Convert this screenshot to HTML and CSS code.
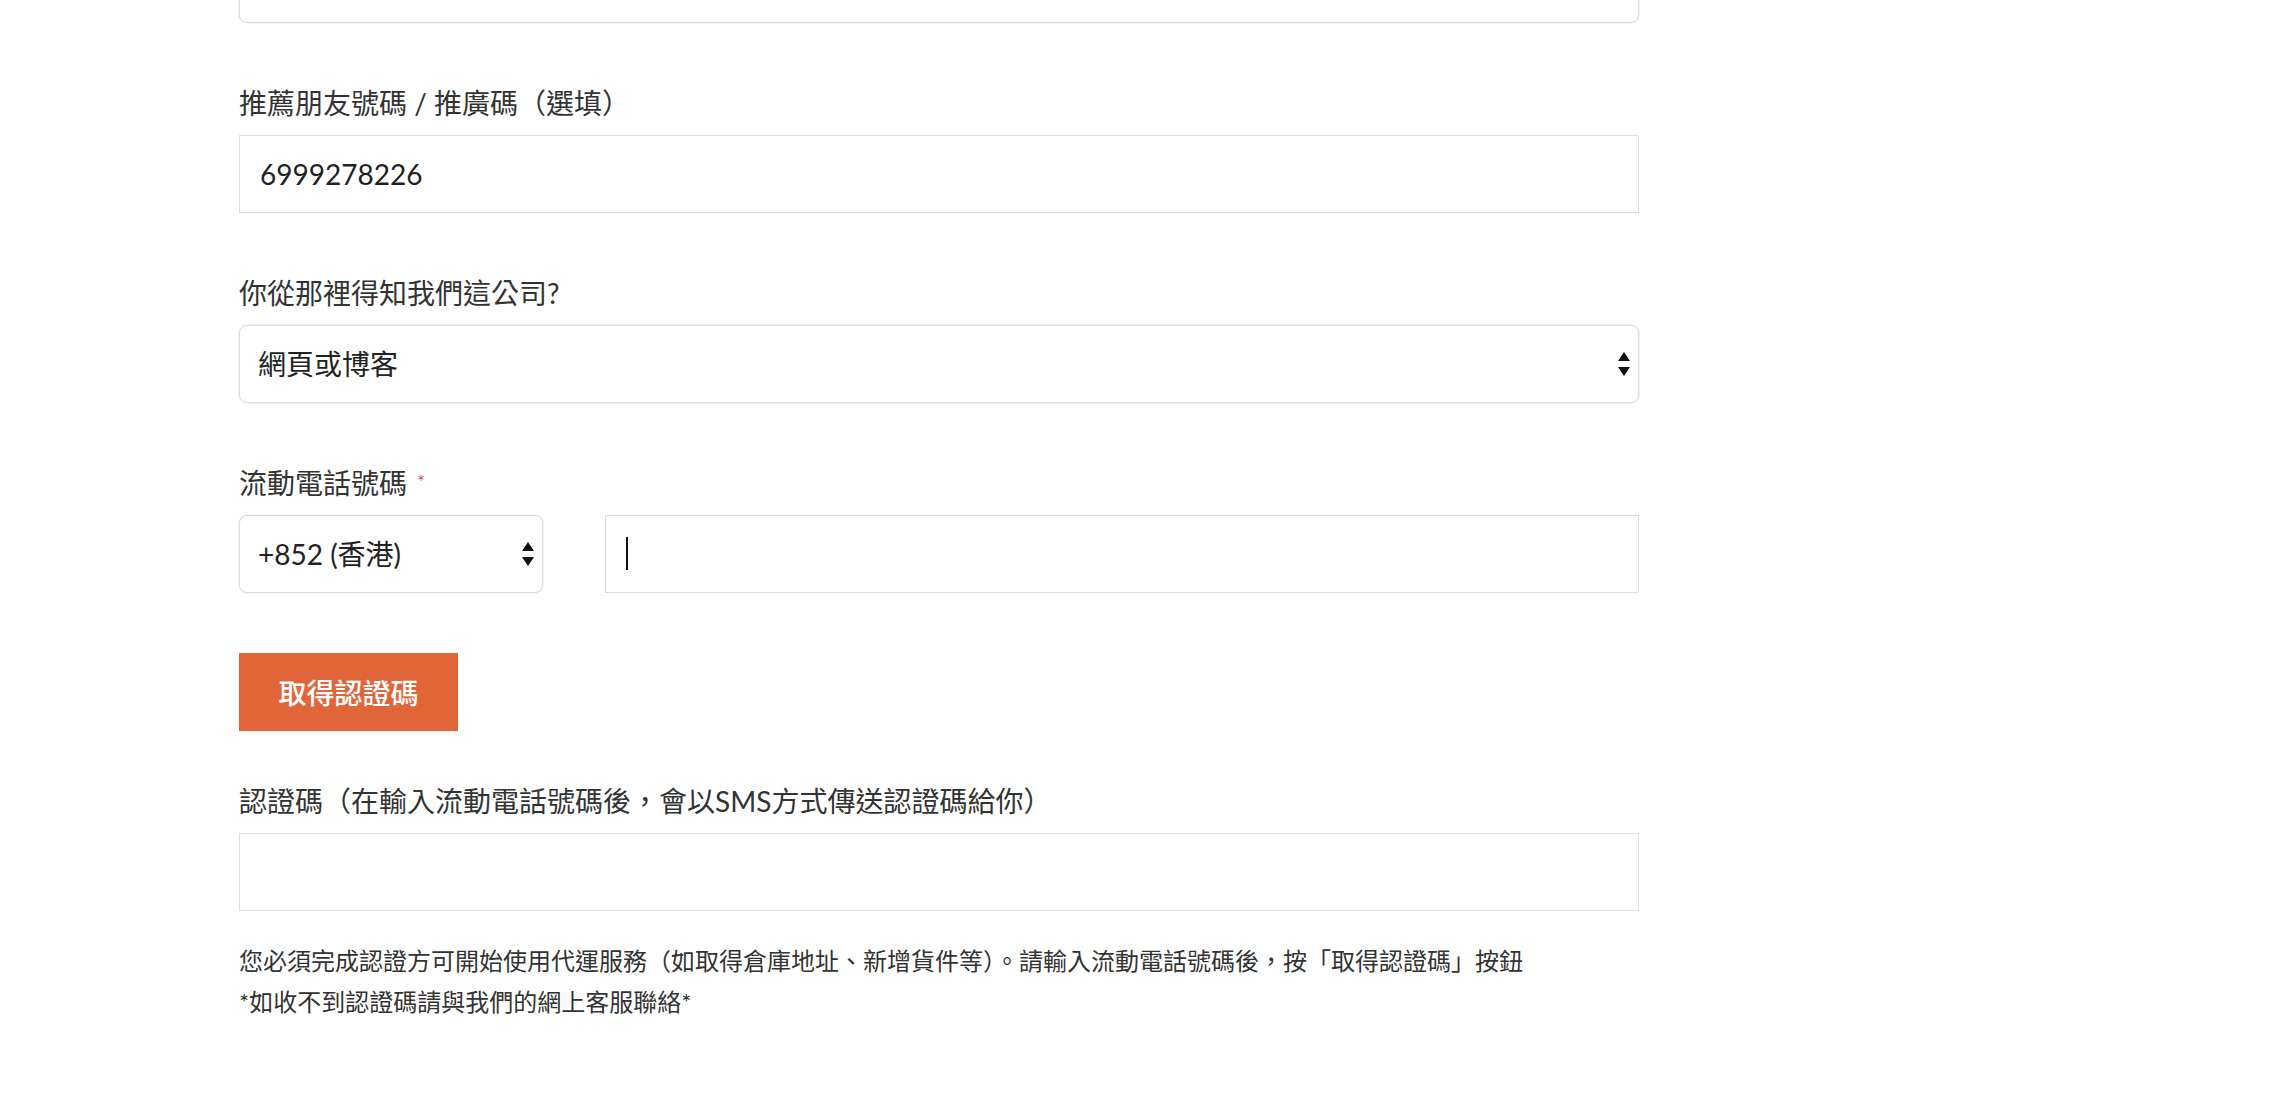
FILE: index.html
```html
<!DOCTYPE html>
<html lang="zh-Hant">

<head>
    <meta charset="utf-8">
    <link rel="stylesheet" href="styles.css">
</head>

<body>
    <form class="signup">
        <!-- 上一欄，已捲出畫面 -->
        <div class="field">
            <div class="select-box">
                <select class="control select">
                    <option>香港</option>
                </select>
                <svg class="arrows" viewBox="0 0 12 24"><polygon points="0,9 6,0 12,9" /><polygon points="0,15 6,24 12,15" /></svg>
            </div>
        </div>

        <div class="field">
            <label class="field-label">推薦朋友號碼 / 推廣碼（選填）</label>
            <input class="control" name="referral" value="6999278226" />
        </div>

        <div class="field">
            <label class="field-label">你從那裡得知我們這公司?</label>
            <div class="select-box">
                <select class="control select" name="source">
                    <option>網頁或博客</option>
                </select>
                <svg class="arrows" viewBox="0 0 12 24"><polygon points="0,9 6,0 12,9" /><polygon points="0,15 6,24 12,15" /></svg>
            </div>
        </div>

        <div class="field">
            <label class="field-label">流動電話號碼 <span class="required">*</span></label>
            <div class="phone-row">
                <div class="select-box phone-code">
                    <select class="control select" name="area">
                        <option>+852 (香港)</option>
                    </select>
                    <svg class="arrows" viewBox="0 0 12 24"><polygon points="0,9 6,0 12,9" /><polygon points="0,15 6,24 12,15" /></svg>
                </div>
                <div class="phone-input">
                    <input class="control" name="mobile" value="" />
                    <span class="caret"></span>
                </div>
            </div>
        </div>

        <button type="button" class="btn-code">取得認證碼</button>

        <div class="field">
            <label class="field-label">認證碼（在輸入流動電話號碼後，會以SMS方式傳送認證碼給你）</label>
            <input class="control" name="code" value="" />
        </div>

        <p class="note">
            您必須完成認證方可開始使用代運服務（如取得倉庫地址、新增貨件等）。請輸入流動電話號碼後，按「取得認證碼」按鈕<br>
            *如收不到認證碼請與我們的網上客服聯絡*
        </p>
    </form>
</body>

</html>
```

FILE: styles.css
```css
body {
    margin: 0;
    background: #fff;
    color: #333;
    font-family: 'Lato', 'Noto Sans CJK TC', sans-serif;
    overflow: hidden;
}

.signup {
    width: 1400px;
    margin: -55px 0 0 239px;
}

.field {
    margin-bottom: 60px;
}

.field-label {
    display: block;
    font-size: 28px;
    line-height: 40px;
    margin-bottom: 12px;
    color: #333;
}

.required {
    display: inline-block;
    vertical-align: top;
    font-size: 18px;
    line-height: 20px;
    margin: 8px 0 0 3px;
    color: #c8506e;
}

.control {
    display: block;
    box-sizing: border-box;
    width: 100%;
    height: 78px;
    margin: 0;
    padding: 0 20px;
    border: 1px solid #dcdcdc;
    background: #fff;
    font-family: 'Lato', 'Noto Sans CJK TC', sans-serif;
    font-size: 28px;
    color: #222;
    outline: none;
}

.select-box {
    position: relative;
}

.select {
    -webkit-appearance: none;
    appearance: none;
    padding: 0 40px 0 18px;
    border-radius: 8px;
    box-shadow: 0 0 0 1px #f3f3f3;
}

.arrows {
    position: absolute;
    right: 9px;
    top: 27px;
    width: 12px;
    height: 24px;
    fill: #111;
    pointer-events: none;
}

.phone-row {
    display: flex;
    gap: 62px;
}

.phone-code {
    width: 304px;
    flex: none;
}

.phone-input {
    position: relative;
    flex: 1;
}

.caret {
    position: absolute;
    left: 21px;
    top: 22px;
    width: 2px;
    height: 33px;
    background: #111;
}

.btn-code {
    display: block;
    width: 219px;
    height: 78px;
    margin: 0 0 50px;
    padding: 0;
    border: none;
    background: #e0663a;
    color: #fff;
    font-family: 'Lato', 'Noto Sans CJK TC', sans-serif;
    font-size: 28px;
    font-weight: 500;
}

.note {
    margin: -31px 0 0;
    font-size: 24px;
    line-height: 41px;
    color: #333;
}
```
